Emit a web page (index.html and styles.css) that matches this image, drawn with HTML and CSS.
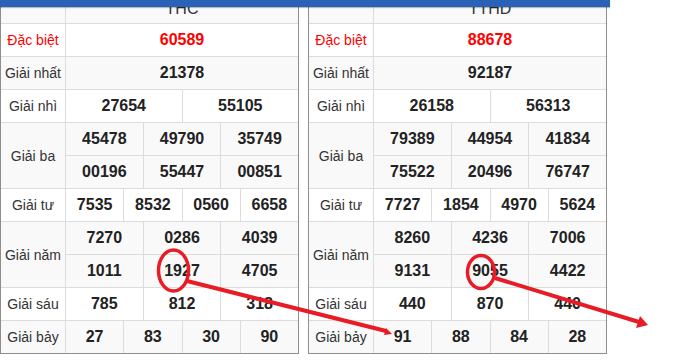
FILE: index.html
```html
<!DOCTYPE html>
<html lang="vi">
<head>
<meta charset="utf-8">
<title>Kết quả xổ số</title>
<link rel="stylesheet" href="styles.css">
</head>
<body>
<div class="page">
  <div class="tables">
    <div class="kq">
      <div class="c alt"></div><div class="c alt s12 head">THC</div>
      <div class="c lbl red">Đặc biệt</div><div class="c s12 num red">60589</div>
      <div class="c alt lbl">Giải nhất</div><div class="c alt s12 num">21378</div>
      <div class="c lbl">Giải nhì</div><div class="c s6 num">27654</div><div class="c s6 num">55105</div>
      <div class="c alt lbl r2">Giải ba</div><div class="c alt s4 num">45478</div><div class="c alt s4 num">49790</div><div class="c alt s4 num">35749</div>
      <div class="c alt s4 num">00196</div><div class="c alt s4 num">55447</div><div class="c alt s4 num">00851</div>
      <div class="c lbl">Giải tư</div><div class="c s3 num">7535</div><div class="c s3 num">8532</div><div class="c s3 num">0560</div><div class="c s3 num">6658</div>
      <div class="c alt lbl r2">Giải năm</div><div class="c alt s4 num">7270</div><div class="c alt s4 num">0286</div><div class="c alt s4 num">4039</div>
      <div class="c alt s4 num">1011</div><div class="c alt s4 num">1927</div><div class="c alt s4 num">4705</div>
      <div class="c lbl">Giải sáu</div><div class="c s4 num">785</div><div class="c s4 num">812</div><div class="c s4 num">318</div>
      <div class="c alt lbl">Giải bảy</div><div class="c alt s3 num">27</div><div class="c alt s3 num">83</div><div class="c alt s3 num">30</div><div class="c alt s3 num">90</div>
    </div>
    <div class="kq">
      <div class="c alt"></div><div class="c alt s12 head">TTHD</div>
      <div class="c lbl red">Đặc biệt</div><div class="c s12 num red">88678</div>
      <div class="c alt lbl">Giải nhất</div><div class="c alt s12 num">92187</div>
      <div class="c lbl">Giải nhì</div><div class="c s6 num">26158</div><div class="c s6 num">56313</div>
      <div class="c alt lbl r2">Giải ba</div><div class="c alt s4 num">79389</div><div class="c alt s4 num">44954</div><div class="c alt s4 num">41834</div>
      <div class="c alt s4 num">75522</div><div class="c alt s4 num">20496</div><div class="c alt s4 num">76747</div>
      <div class="c lbl">Giải tư</div><div class="c s3 num">7727</div><div class="c s3 num">1854</div><div class="c s3 num">4970</div><div class="c s3 num">5624</div>
      <div class="c alt lbl r2">Giải năm</div><div class="c alt s4 num">8260</div><div class="c alt s4 num">4236</div><div class="c alt s4 num">7006</div>
      <div class="c alt s4 num">9131</div><div class="c alt s4 num">9055</div><div class="c alt s4 num">4422</div>
      <div class="c lbl">Giải sáu</div><div class="c s4 num">440</div><div class="c s4 num">870</div><div class="c s4 num">440</div>
      <div class="c alt lbl">Giải bảy</div><div class="c alt s3 num">91</div><div class="c alt s3 num">88</div><div class="c alt s3 num">84</div><div class="c alt s3 num">28</div>
    </div>
  </div>
  <div class="topbar"></div>
  <svg class="marks" width="680" height="360" viewBox="0 0 680 360">
    <g fill="none" stroke="#e81c25" stroke-width="3.5">
      <ellipse cx="173.5" cy="270.5" rx="15" ry="20.5"/>
      <ellipse cx="481" cy="272" rx="13.5" ry="16.5"/>
    </g>
    <g stroke="#e81c25" stroke-width="4" stroke-linecap="butt">
      <line x1="187" y1="281" x2="386" y2="331"/>
      <line x1="495" y1="278" x2="639" y2="322"/>
    </g>
    <g fill="#e81c25">
      <polygon points="392,334 384,335 386,328"/>
      <polygon points="648,325 636,328 640,316"/>
    </g>
  </svg>
</div>
</body>
</html>
```

FILE: styles.css
```css
html, body {
  margin: 0;
  padding: 0;
  background: #fff;
}
body {
  font-family: "Liberation Sans", Arial, sans-serif;
  color: #333;
}
.page {
  position: relative;
  width: 680px;
  height: 360px;
  overflow: hidden;
}
.tables {
  display: flex;
  gap: 9px;
  margin-top: -10px;
}
.kq {
  box-sizing: border-box;
  width: 299px;
  display: grid;
  grid-template-columns: 64px repeat(12, 1fr);
  grid-auto-rows: 32px;
  gap: 1px;
  background: #dcdcdc;
  border: 1px solid #8e8e8e;
}
.c {
  background: #fff;
  display: flex;
  align-items: center;
  justify-content: center;
  white-space: nowrap;
}
.c.alt {
  background: #f9f9f9;
}
.s12 { grid-column: span 12; }
.s6 { grid-column: span 6; }
.s4 { grid-column: span 4; }
.s3 { grid-column: span 3; }
.r2 { grid-row: span 2; }
.lbl {
  font-size: 14px;
  color: #333;
}
.num {
  font-size: 16px;
  font-weight: bold;
  color: #222;
}
.red {
  color: #f00;
}
.head {
  font-size: 16px;
  color: #333;
  padding-top: 4px;
}
.topbar {
  position: absolute;
  top: 0;
  left: 0;
  width: 610px;
  height: 7px;
  background: #2a62b8;
  box-shadow: 0 1px 1px rgba(0, 0, 0, 0.25);
}
.marks {
  position: absolute;
  top: 0;
  left: 0;
  pointer-events: none;
}
```
